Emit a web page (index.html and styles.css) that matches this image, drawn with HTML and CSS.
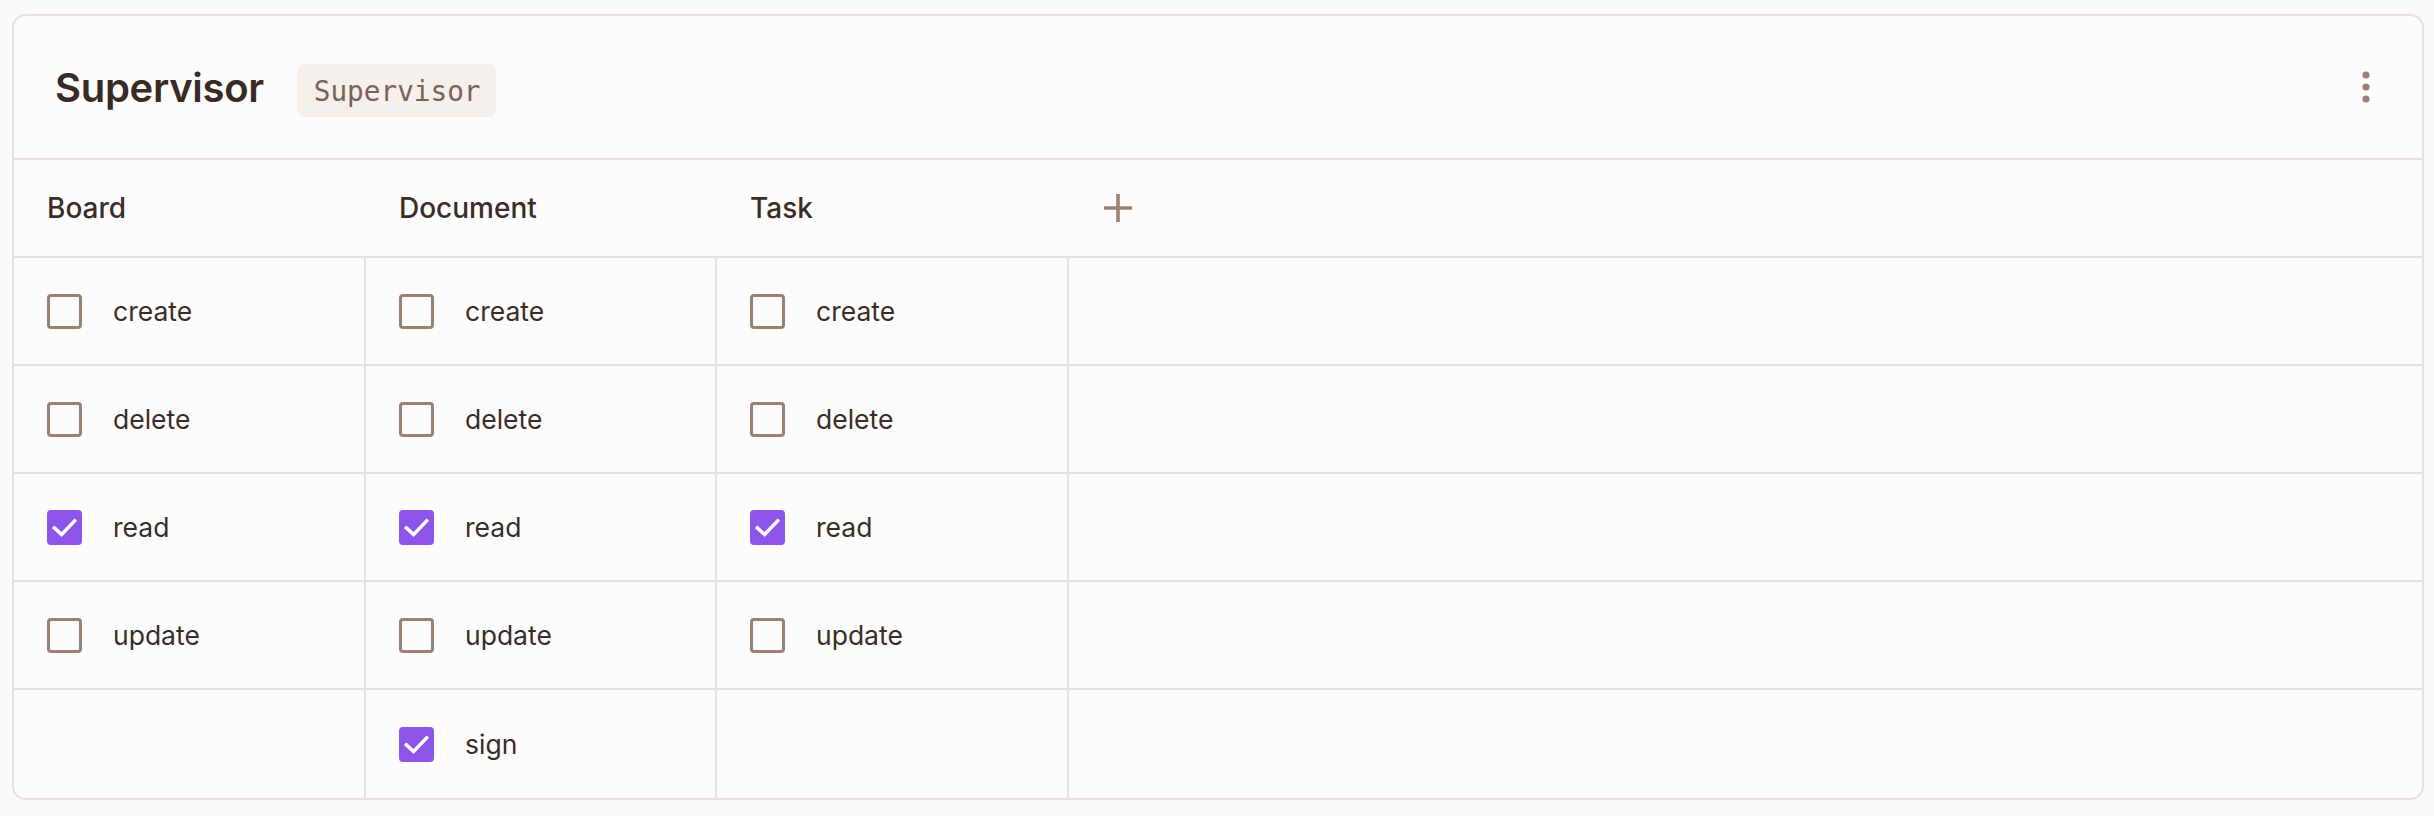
FILE: index.html
```html
<!DOCTYPE html>
<html lang="en">
<head>
<meta charset="utf-8">
<title>Supervisor</title>
<link rel="stylesheet" href="styles.css">
</head>
<body>
<div class="card">
  <div class="card-head">
    <div class="title-wrap">
      <h2 class="title">Supervisor</h2>
      <span class="badge">Supervisor</span>
    </div>
    <button class="kebab" aria-label="More">
      <svg width="10" height="34" viewBox="0 0 10 34"><circle cx="5" cy="5" r="3.6"/><circle cx="5" cy="17" r="3.6"/><circle cx="5" cy="29" r="3.6"/></svg>
    </button>
  </div>
  <div class="matrix">
    <div class="mrow mhead">
      <div class="hcell">Board</div>
      <div class="hcell">Document</div>
      <div class="hcell">Task</div>
      <div class="hcell add">
        <svg width="28" height="28" viewBox="0 0 28 28"><path d="M14 0V28M0 14H28"/></svg>
      </div>
    </div>
    <div class="mrow">
      <div class="cell"><span class="cb"></span><span class="lbl">create</span></div>
      <div class="cell"><span class="cb"></span><span class="lbl">create</span></div>
      <div class="cell"><span class="cb"></span><span class="lbl">create</span></div>
      <div class="cell fill"></div>
    </div>
    <div class="mrow">
      <div class="cell"><span class="cb"></span><span class="lbl">delete</span></div>
      <div class="cell"><span class="cb"></span><span class="lbl">delete</span></div>
      <div class="cell"><span class="cb"></span><span class="lbl">delete</span></div>
      <div class="cell fill"></div>
    </div>
    <div class="mrow">
      <div class="cell"><span class="cb on"><svg viewBox="0 0 20 20"><path d="M4.2 10.2L8.3 14L15.8 6.2"/></svg></span><span class="lbl">read</span></div>
      <div class="cell"><span class="cb on"><svg viewBox="0 0 20 20"><path d="M4.2 10.2L8.3 14L15.8 6.2"/></svg></span><span class="lbl">read</span></div>
      <div class="cell"><span class="cb on"><svg viewBox="0 0 20 20"><path d="M4.2 10.2L8.3 14L15.8 6.2"/></svg></span><span class="lbl">read</span></div>
      <div class="cell fill"></div>
    </div>
    <div class="mrow">
      <div class="cell"><span class="cb"></span><span class="lbl">update</span></div>
      <div class="cell"><span class="cb"></span><span class="lbl">update</span></div>
      <div class="cell"><span class="cb"></span><span class="lbl">update</span></div>
      <div class="cell fill"></div>
    </div>
    <div class="mrow">
      <div class="cell"></div>
      <div class="cell"><span class="cb on"><svg viewBox="0 0 20 20"><path d="M4.2 10.2L8.3 14L15.8 6.2"/></svg></span><span class="lbl">sign</span></div>
      <div class="cell"></div>
      <div class="cell fill"></div>
    </div>
  </div>
</div>
</body>
</html>
```
FILE: styles.css
```css
* { box-sizing: border-box; }
html, body { margin: 0; padding: 0; }
body {
  background: #fafafa;
  font-family: Inter, "Noto Sans", sans-serif;
  color: #3c2c27;
}
.card {
  margin: 14px 10px 0 12px;
  background: #fdfcfc;
  border: 2px solid #ebe0dc;
  border-radius: 14px;
  overflow: hidden;
}
.card-head {
  height: 144px;
  display: flex;
  align-items: center;
  justify-content: space-between;
  padding: 0 36px 0 41px;
  border-bottom: 2px solid #ebe0dc;
}
.title-wrap {
  display: flex;
  align-items: center;
  gap: 33px;
}
.title {
  margin: 0;
  font-size: 40px;
  font-weight: 600;
  letter-spacing: -0.3px;
  color: #3a2a25;
}
.badge {
  display: inline-flex;
  align-items: center;
  height: 53px;
  margin-top: 6px;
  padding: 2px 16px 0 17px;
  background: #f6f0ed;
  border-radius: 8px;
  font-family: "DejaVu Sans Mono", "Liberation Mono", monospace;
  font-size: 27.7px;
  color: #7b6158;
}
.kebab {
  width: 40px;
  height: 40px;
  border: 0;
  padding: 0;
  background: transparent;
  display: flex;
  align-items: center;
  justify-content: center;
}
.kebab svg { fill: #9e8073; }
.mrow {
  display: grid;
  grid-template-columns: 352px 351px 352px 1fr;
  height: 108px;
  border-bottom: 2px solid #e6dfdd;
}
.mrow:last-child { border-bottom: 0; height: 108px; }
.mhead { height: 98px; }
.hcell {
  display: flex;
  align-items: center;
  padding-left: 33px;
  font-size: 28px;
  font-weight: 500;
  color: #3c2c27;
}
.hcell.add { padding-left: 35px; }
.hcell.add svg { stroke: #9e8073; stroke-width: 3.6; fill: none; }
.cell {
  display: flex;
  align-items: center;
  padding-left: 33px;
  border-right: 2px solid #ebe0dc;
}
.cell.fill { border-right: 0; }
.cb {
  flex: none;
  width: 35px;
  height: 35px;
  border: 3.2px solid #9e8073;
  border-radius: 4px;
  margin-right: 31px;
  display: flex;
  align-items: center;
  justify-content: center;
}
.cb.on {
  background: #8c54e8;
  border-color: #8c54e8;
}
.cb svg {
  width: 35px;
  height: 35px;
  flex: none;
  fill: none;
  stroke: #fff;
  stroke-width: 2;
  stroke-linecap: square;
}
.lbl {
  font-size: 26.5px;
  font-weight: 400;
  color: #3c2c27;
}
```
